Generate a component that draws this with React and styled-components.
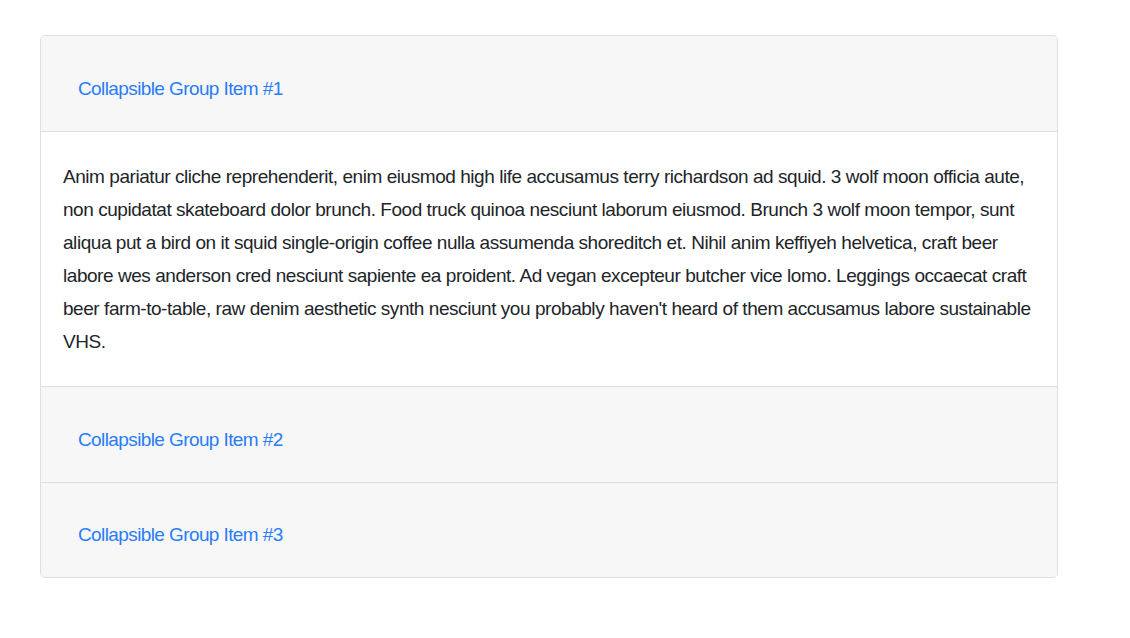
import React, { useState } from 'react'
import styled, { createGlobalStyle } from 'styled-components'

const Global = createGlobalStyle`
	body {
		margin: 0;
		background: #fff;
		font-family: "Liberation Sans", Arial, sans-serif;
		color: #212529;
	}
`

const Page = styled.div`
	padding: 35px 0 0 40px;
`

const Accordion = styled.div`
	box-sizing: border-box;
	width: 1018px;
	border: 1px solid #dfdfdf;
	border-radius: 5px;
	overflow: hidden;
`

const Item = styled.div`
	& + & {
		border-top: 1px solid #dfdfdf;
	}
	&:last-child > div {
		height: 94px;
	}
`

const Header = styled.div`
	box-sizing: border-box;
	height: ${p => (p.open ? '96px' : '95px')};
	padding: 10px 0 0 37px;
	display: flex;
	align-items: center;
	background: #f7f7f7;
	border-bottom: ${p => (p.open ? '1px solid #dfdfdf' : 'none')};
`

const Toggle = styled.button`
	background: none;
	border: 0;
	padding: 0;
	font: inherit;
	font-size: 19px;
	letter-spacing: -0.6px;
	color: #2a7cf7;
	cursor: pointer;
`

const Body = styled.div`
	padding: 28px 22px 28px 22px;
	font-size: 19px;
	letter-spacing: -0.45px;
	line-height: 33px;
`

const items = [
	'Collapsible Group Item #1',
	'Collapsible Group Item #2',
	'Collapsible Group Item #3',
]

const text =
	"Anim pariatur cliche reprehenderit, enim eiusmod high life accusamus terry richardson ad squid. 3 wolf moon officia aute, non cupidatat skateboard dolor brunch. Food truck quinoa nesciunt laborum eiusmod. Brunch 3 wolf moon tempor, sunt aliqua put a bird on it squid single-origin coffee nulla assumenda shoreditch et. Nihil anim keffiyeh helvetica, craft beer labore wes anderson cred nesciunt sapiente ea proident. Ad vegan excepteur butcher vice lomo. Leggings occaecat craft beer farm-to-table, raw denim aesthetic synth nesciunt you probably haven't heard of them accusamus labore sustainable VHS."

export default function App() {
	const [open, setOpen] = useState(0)
	return (
		<Page>
			<Global />
			<Accordion>
				{items.map((title, i) => (
					<Item key={title}>
						<Header open={open === i}>
							<Toggle onClick={() => setOpen(open === i ? -1 : i)}>{title}</Toggle>
						</Header>
						{open === i && <Body>{text}</Body>}
					</Item>
				))}
			</Accordion>
		</Page>
	)
}
